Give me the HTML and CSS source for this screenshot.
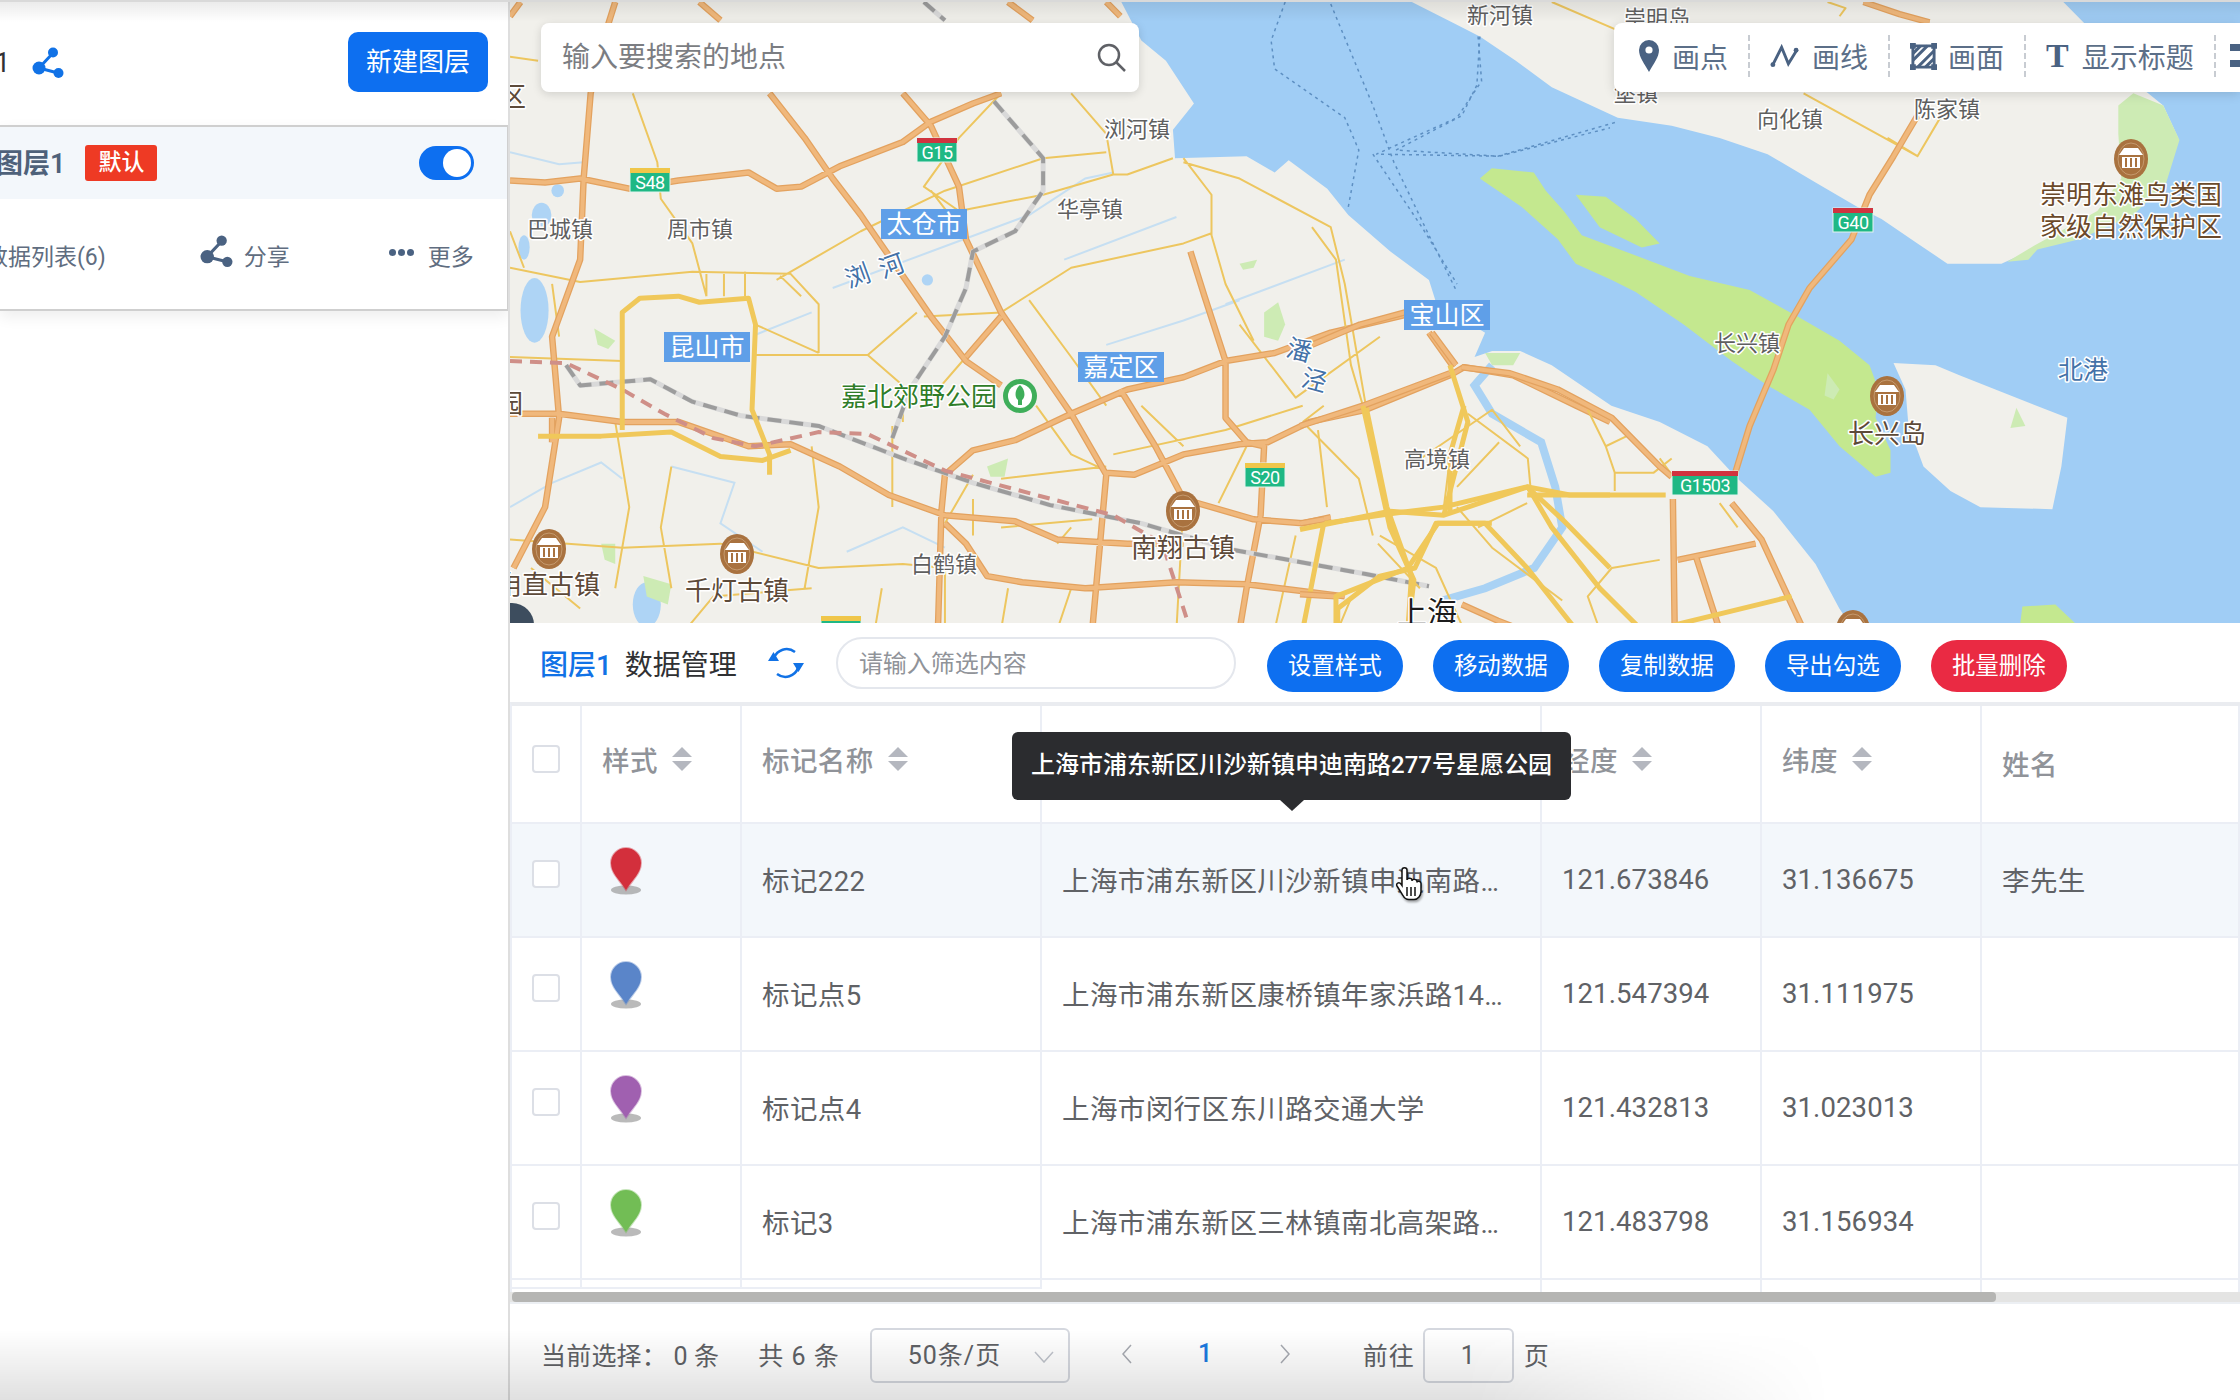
FILE: index.html
```html
<!DOCTYPE html>
<html lang="zh-CN">
<head>
    <meta charset="UTF-8">
    <title>图层数据管理</title>
    <link rel="stylesheet" href="styles.css">
</head>
<body>

<svg class="defs" aria-hidden="true">
    <symbol id="share" viewBox="0 0 32 32">
        <path d="M7 21 21 6M7 21l19 5" fill="none" stroke="currentColor" stroke-width="3"/>
        <circle cx="7" cy="21" r="6.5" fill="currentColor"/>
        <circle cx="21" cy="5.5" r="5" fill="currentColor"/>
        <circle cx="26.500" cy="26" r="5" fill="currentColor"/>
    </symbol>
    <symbol id="museum" viewBox="0 0 34 40">
        <ellipse cx="17" cy="20" rx="17" ry="20" fill="#a9723f"/>
        <ellipse cx="17" cy="20" rx="13" ry="16" fill="#a9723f" stroke="#c59a6e" stroke-width="1"/>
        <path d="M5 16 10 9h14l5 7z" fill="#fff"/>
        <path d="M8 18h18v11H8z" fill="#fff"/>
        <path d="M11 19h2v9h-2zM16 19h2v9h-2zM21 19h2v9h-2z" fill="#a9723f"/>
    </symbol>
    <symbol id="marker" viewBox="0 0 32 48">
        <ellipse cx="16" cy="43" rx="15" ry="4.500" fill="#8c8c8c" opacity=".6"/>
        <path d="M16 43C9 32 1 26 1 16a15 15 0 0 1 30 0c0 10-8 16-15 27z" fill="currentColor" stroke="currentColor" stroke-opacity=".4" stroke-width="2"/>
    </symbol>
</svg>

<div class="page">
    <aside class="sidebar">
        <div class="side-head">
            <span class="side-title">1</span>
            <svg class="share-blue"><use href="#share"/></svg>
            <button class="new-layer" type="button">新建图层</button>
        </div>
        <div class="layer-card">
            <div class="layer-top">
                <span class="layer-name">图层1</span>
                <span class="tag-default">默认</span>
                <span class="switch"><i></i></span>
            </div>
            <div class="layer-actions">
                <span class="data-count">数据列表(6)</span>
                <span class="layer-action share-action"><svg class="share-grey"><use href="#share"/></svg>分享</span>
                <span class="layer-action more-action"><b class="dots"><i></i><i></i><i></i></b>更多</span>
            </div>
        </div>
    </aside>

    <main class="content">
        <section class="map">
            <svg class="map-svg" viewBox="510 0 1730 623">
                <rect class="water" x="510" y="0" width="1730" height="623"/>

                <!-- 西侧：大陆部分 -->
                <g transform="translate(510 0) scale(.7015 .4057)">
                    <polygon class="land" points="0,0 870,0 900,100 935,150 975,255 945,320 948,390 1050,385 1090,425 1110,395 1165,465 1195,530 1255,620 1310,690 1320,745 1390,820 1375,880 1400,865 1440,865 1485,900 1570,1000 1639,1040 1707,1100 1750,1180 1801,1260 1861,1390 1895,1500 1916,1553 0,1553"/>
                    <ellipse class="lake" cx="35" cy="765" rx="20" ry="80"/>
                    <ellipse class="lake" cx="45" cy="530" rx="14" ry="30"/>
                    <ellipse class="lake" cx="68" cy="470" rx="9" ry="16"/>
                    <ellipse class="lake" cx="20" cy="610" rx="8" ry="30"/>
                    <ellipse class="lake" cx="195" cy="1490" rx="20" ry="55"/>
                    <ellipse class="lake" cx="595" cy="690" rx="8" ry="14"/>
                    <polygon class="park" points="1075,770 1095,745 1105,800 1095,840 1075,830"/>
                    <polygon class="park" points="680,1150 710,1130 705,1175 685,1175"/>
                    <polygon class="park" points="1040,650 1065,640 1060,660 1045,665"/>
                    <polygon class="park" points="120,810 150,840 140,860 125,850"/>
                    <polygon class="park" points="190,1420 230,1440 225,1490 195,1470"/>
                    <polygon class="park" points="130,1340 150,1340 150,1390 135,1380"/>
                    <polygon class="park" points="1390,870 1440,870 1430,900 1400,900"/>
                    <path class="creek" d="M460 710 600 620 740 530 820 440 860 425M350 825 430 770M790 640 950 535M1020 750 1190 640M850 850 960 790 1040 740M0 375 70 405 105 400M230 1150 320 1190 300 1290 360 1360M0 1250 60 1190 130 1140 160 1180M480 1360 560 1300 620 1350"/>
                    <path class="river" d="M1400 900 1375 950 1400 1020 1470 1090 1490 1200 1500 1300 1460 1400 1390 1450 1330 1480"/>

                    <g id="minor-roads">
                        <path d="M175 230 210 400 215 490 260 600 280 730M0 660 100 695 260 670 400 675 440 750 440 870M345 875 510 875 580 770M380 690 500 570 620 470 760 390 850 375M700 230 640 340 590 460 640 520 760 480 860 430 880 430 945 390M960 390 1000 480 1000 580 1020 700 1060 840M800 230 850 330 860 430M600 470 640 560M590 780 700 770 800 660 960 600 1000 575M740 740 800 880 850 1000M960 400 1040 440 1170 560 1190 700 1220 1000M160 1350 300 1340 440 1400 560 1390 620 1400M230 1150 215 1300 230 1450M150 1040 170 1250 150 1450M430 1100 440 1250 420 1450M545 1050 545 1250M700 1180 850 1150M1130 1040 1210 1180 1230 1320M700 1300 830 1280M1040 800 1120 980 1240 830M860 1120 1020 1060 1130 1000M280 670 280 730M305 670 305 730M335 670 335 730M385 680 415 730M0 880 160 890M510 875 560 950 560 1040M1350 1250 1400 1350 1500 1480M1240 1320 1320 1400 1360 1553M620 1553 620 1400M700 1553 710 1450M520 1553 530 1450M30 1400 100 1500M1010 1240 1050 1100M0 140 40 150M0 570 20 660M60 700 70 830M350 800 440 870M590 1000 650 880M660 1170 620 1290M750 1000 800 1120 850 1160M900 1000 960 1100M1160 1000 1130 1040M780 1553 800 1450M960 1240 950 1553M1120 1320 1090 1553M1200 1470 1180 1553M1290 1140 1400 1010 1440 1100M1410 1090 1350 1200M1380 1300 1450 1240M250 1553 290 1470 430 1450M0 1330 160 1350M780 1340 800 1300M660 1230 660 1320"/>
                    </g>

                    <g id="major-roads">
                        <path d="M0 445 50 450 100 440 170 465 240 445 340 425 380 465 415 460 470 410 560 350 600 300 660 255 700 230M150 5 140 60 115 230 105 440 100 640 60 830 70 1030 50 1250 5 1400M560 230 600 310 640 460 650 590 700 770 760 920 800 1020 850 1170 830 1553M0 1020 70 1020 160 1040 240 1040 340 1100 400 1095 470 1150 540 1220 620 1270 720 1285 780 1330 880 1340 960 1340M610 1553 615 1260 620 1170 660 1110 720 1085 800 1020 880 960 960 930 1020 890 1090 870 1170 820 1280 775M850 1165 890 1170 960 1120 1040 1095 1080 1090 1140 1040 1220 1010 1340 925 1360 905 1430 925 1520 1000 1568 1040M970 620 990 730 1020 890 1020 1030 1050 1090 1075 1100 1070 1270 1050 1450 1040 1553M620 1290 650 1340 680 1420 730 1435 820 1450 950 1435 1050 1440 1120 1455 1190 1470M870 960 920 1100 960 1230 1060 1280 1130 1290 1170 1275M370 230 420 340 460 440 500 530 560 680 600 780 650 890 700 950M650 880 700 780M1310 820 1345 905M850 5 870 40M270 5 300 50M710 5 745 50M0 40 15 5M60 1030 60 1090"/>
                    </g>
                    <use href="#major-roads" class="road-case"/>
                    <use href="#major-roads" class="road-fill"/>

                    <g id="rails">
                        <path d="M590 5 620 50M690 250 760 390 760 470 720 570 660 620 650 710 620 830 570 960 545 1080M80 900 100 950 200 935 260 990 330 1025 440 1050 560 1130 660 1190 770 1245 900 1290 1030 1355 1220 1415 1310 1445"/>
                    </g>
                    <use href="#rails" class="rail-base"/>
                    <use href="#rails" class="rail"/>
                    <path class="rail-red" d="M0 890 80 895 160 960 220 1020 290 1080 350 1100 440 1065 510 1070 620 1160 750 1220 860 1270 930 1340 970 1553"/>

                    <path class="express" d="M160 1060 160 770 185 735 240 730 270 745 340 735 350 800 345 1010 370 1120 370 1170M40 1075 130 1075 230 1065 300 1125 360 1135 400 1110M1130 1553 1160 1290 1260 1265 1330 1250 1450 1200 1500 1280 1568 1400M1220 1000 1250 1250 1285 1420 1280 1553M1360 1000 1340 1120 1340 1260M1180 1553 1180 1500 1240 1420 1290 1400 1320 1290 1390 1290 1450 1400 1520 1553M1450 1220 1568 1220"/>
                    <path class="shipping" d="M1105 5 1085 100 1090 170 1190 290 1210 370 1195 510M1170 10 1230 260 1260 400 1310 580 1350 720M1380 90 1385 200 1350 290 1235 380 1410 385 1568 315M1230 380 1300 560 1350 700"/>
                </g>

                <!-- 东侧：崇明、长兴、横沙 -->
                <g transform="translate(1300 0) scale(.5995 .4057)">
                    <polygon class="land" points="180,0 260,60 300,90 360,150 420,215 530,290 620,310 700,340 780,380 860,450 930,510 970,540 1030,600 1080,650 1170,650 1230,610 1330,560 1420,470 1465,340 1440,260 1390,200 1310,60 1270,0"/>
                    <polygon class="park" points="1390,230 1440,260 1467,345 1445,450 1390,530 1300,590 1230,615 1215,640 1180,645 1225,605 1330,520 1370,440 1365,330 1365,260"/>
                    <polygon class="island" points="300,440 320,415 390,425 410,470 440,520 470,580 560,630 650,680 750,715 830,780 900,840 950,900 965,960 960,1030 985,1110 985,1165 960,1175 900,1100 850,1010 780,950 720,890 640,800 560,720 520,690 460,650 430,590 370,510"/>
                    <polygon class="island" points="460,480 510,485 560,540 600,600 570,610 500,560"/>
                    <polygon class="land" points="990,895 1060,900 1100,925 1160,960 1280,1030 1270,1150 1255,1255 1135,1250 1085,1210 1040,1150 1015,1050 1010,960"/>
                    <polygon class="park" points="1195,1005 1210,1050 1185,1055"/>
                    <polygon class="park" points="880,920 900,960 890,985 875,975"/>
                    <polygon class="island" points="1200,1553 1205,1495 1260,1490 1305,1553"/>
                    <polygon class="island" points="1360,1553 1400,1535 1465,1553"/>
                    <path class="shipping" d="M300 90 295 210 270 285 160 370 330 385 530 300"/>

                    <g id="east-minor">
                        <path d="M420 5 530 75M840 230 1030 385 1070 285M880 5 910 20 900 40M980 340 1030 385M20 560 60 640 85 900 105 1000M480 1010 510 1100 525 1165 525 1210M510 1100 545 1075M525 1165 590 1165 620 1130M600 1130 620 1170M280 1020 380 1130 385 1210M250 1130 240 1250M600 1380 520 1400 480 1470 500 1553M700 1240 730 1300M130 1340 200 1450M30 1060 45 1250"/>
                    </g>
                    <g id="east-major">
                        <path d="M940 5 1000 35 1050 55M1030 285 990 385 950 480 920 590 850 710 815 800 790 910 750 1050 725 1170M20 850 100 800 175 770M220 820 260 900M270 905 350 920 430 960 520 1030 600 1150 620 1175M720 1240 770 1330 840 1553M622 1230 625 1553M630 1380 760 1340M660 1370 700 1553M0 1050 105 1000 250 920M0 1290 40 1280M270 1490 330 1530 370 1553M0 1465 60 1470"/>
                    </g>
                    <use href="#east-major" class="road-case"/>
                    <use href="#east-major" class="road-fill"/>
                    <path class="express" d="M380 1200 450 1220 610 1220M590 1553 820 1470M250 900 280 1040 240 1270M105 1000 150 1300 190 1430 180 1553M0 1305 150 1260 240 1270 380 1200 420 1300 500 1450 570 1553M60 1553 60 1470 180 1400 230 1290 320 1290"/>
                </g>

                <!-- 路牌 -->
                <rect class="shield" x="917" y="138" width="40" height="24"/><rect class="band-red" x="917" y="138" width="40" height="5"/>
                <text class="shield-text" x="937" y="154">G15</text>
                <rect class="shield" x="630" y="168" width="40" height="24"/><rect class="band-yellow" x="630" y="168" width="40" height="5"/>
                <text class="shield-text" x="650" y="184">S48</text>
                <rect class="shield" x="1833" y="208" width="40" height="24"/><rect class="band-red" x="1833" y="208" width="40" height="5"/>
                <text class="shield-text" x="1853" y="224">G40</text>
                <rect class="shield" x="1245" y="463" width="40" height="24"/><rect class="band-yellow" x="1245" y="463" width="40" height="5"/>
                <text class="shield-text" x="1265" y="479">S20</text>
                <rect class="shield" x="1672" y="471" width="66" height="24"/><rect class="band-red" x="1672" y="471" width="66" height="5"/>
                <text class="shield-text" x="1705" y="487">G1503</text>
                <rect class="shield" x="821" y="616" width="40" height="24"/><rect class="band-yellow" x="821" y="616" width="40" height="5"/>
                <text class="shield-text" x="841" y="632">S26</text>

                <!-- 景点 -->
                <use href="#museum" x="532" y="529" width="34" height="40"/>
                <use href="#museum" x="720" y="534" width="34" height="40"/>
                <use href="#museum" x="1166" y="491" width="34" height="40"/>
                <use href="#museum" x="2114" y="139" width="34" height="40"/>
                <use href="#museum" x="1870" y="376" width="34" height="40"/>
                <use href="#museum" x="1836" y="610" width="34" height="40"/>
                <circle class="park-dot" cx="1020" cy="396" r="17"/>
                <circle class="park-ring" cx="1020" cy="396" r="12"/>
                <path class="park-tree" d="M1020 385c5 4 6 12 2 15v5h-4v-5c-4-3-3-11 2-15z"/>
                <circle class="locate" cx="512" cy="625" r="22"/>

                <!-- 地名 -->
                <text class="town" x="1500" y="15">新河镇</text>
                <text class="town" x="1657" y="18">崇明岛</text>
                <text class="town" x="1636" y="93">堡镇</text>
                <text class="town" x="1790" y="119">向化镇</text>
                <text class="town" x="1947" y="109">陈家镇</text>
                <text class="town" x="1137" y="129">浏河镇</text>
                <text class="town" x="1090" y="209">华亭镇</text>
                <text class="town" x="560" y="229">巴城镇</text>
                <text class="town" x="700" y="229">周市镇</text>
                <text class="town" x="1747" y="343">长兴镇</text>
                <text class="town" x="1437" y="459">高境镇</text>
                <text class="town" x="944" y="564">白鹤镇</text>
                <text class="river-name" transform="translate(857 276) rotate(-20)">浏</text>
                <text class="river-name" transform="translate(891 266) rotate(-20)">河</text>
                <text class="river-name" transform="translate(1300 350) rotate(15)">潘</text>
                <text class="river-name" transform="translate(1315 380) rotate(15)">泾</text>
                <text class="river-name" x="2083" y="370">北港</text>
                <text class="scenic" x="1183" y="547">南翔古镇</text>
                <text class="scenic" x="737" y="590">千灯古镇</text>
                <text class="scenic" x="548" y="584">甪直古镇</text>
                <text class="scenic" x="1887" y="433">长兴岛</text>
                <text class="scenic" x="513" y="96">区</text>
                <text class="scenic" x="510" y="403">园</text>
                <text class="reserve" x="2131" y="194">崇明东滩鸟类国</text>
                <text class="reserve" x="2131" y="226">家级自然保护区</text>
                <text class="park-name" x="919" y="396">嘉北郊野公园</text>
                <text class="city" x="1427" y="612">上海</text>

                <rect class="district" x="881" y="209" width="86" height="30"/>
                <text class="district-text" x="924" y="224">太仓市</text>
                <rect class="district" x="664" y="332" width="86" height="30"/>
                <text class="district-text" x="707" y="347">昆山市</text>
                <rect class="district" x="1078" y="352" width="86" height="30"/>
                <text class="district-text" x="1121" y="367">嘉定区</text>
                <rect class="district" x="1404" y="300" width="86" height="30"/>
                <text class="district-text" x="1447" y="315">宝山区</text>
            </svg>

            <div class="map-overlay">
                <div class="map-search">
                    <span class="search-text">输入要搜索的地点</span>
                    <svg viewBox="0 0 30 30" class="search-icon"><circle cx="12" cy="12" r="10"/><path d="M19 19l9 9"/></svg>
                </div>
                <div class="draw-tools">
                    <span class="tool">
                        <svg class="tool-icon tool-pin" viewBox="0 0 20 32"><path d="M10 32C5 23 0 17 0 10a10 10 0 0 1 20 0c0 7-5 13-10 22z" fill="currentColor"/><circle cx="10" cy="10" r="3.600" fill="#fff"/></svg>
                        画点
                    </span>
                    <span class="tool">
                        <svg class="tool-icon tool-line" viewBox="0 0 30 24"><path d="M3 21 12 3l7 17 8-13" fill="none" stroke="currentColor" stroke-width="3"/><circle cx="3" cy="21" r="2.500" fill="currentColor"/><circle cx="27" cy="6" r="2.500" fill="currentColor"/></svg>
                        画线
                    </span>
                    <span class="tool">
                        <svg class="tool-icon tool-area" viewBox="0 0 28 28"><path d="M3 3h22v22H3z" fill="none" stroke="currentColor" stroke-width="3"/><path d="M3 18 18 3M8 25 25 8M3 11l8-8M16 25l9-9" stroke="currentColor" stroke-width="3"/><path d="M0 0h6v6H0zM22 0h6v6h-6zM0 22h6v6H0zM22 22h6v6h-6z" fill="currentColor"/></svg>
                        画面
                    </span>
                    <span class="tool">
                        <b class="tool-t">T</b>
                        显示标题
                    </span>
                    <span class="tool tool-last">
                        <svg class="tool-icon tool-table" viewBox="0 0 28 28"><path d="M0 2h28v7H0zM0 18h28v7H0z" fill="currentColor"/></svg>
                    </span>
                </div>
            </div>
        </section>

        <section class="data-panel">
            <div class="data-bar">
                <h2 class="data-title"><em>图层1</em> 数据管理</h2>
                <svg class="refresh" viewBox="0 0 38 38">
                    <path d="M7 14C10 6 20 2 28 8M31 24c-3 8-13 12-21 6" fill="none" stroke="#1172e6" stroke-width="2.500"/>
                    <path d="M1 17h11L6.500 8zM37 19H26l5.500 9z" fill="#1172e6"/>
                </svg>
                <div class="filter-input">请输入筛选内容</div>
                <button class="pill" type="button">设置样式</button>
                <button class="pill" type="button">移动数据</button>
                <button class="pill" type="button">复制数据</button>
                <button class="pill" type="button">导出勾选</button>
                <button class="pill pill-danger" type="button">批量删除</button>
            </div>

            <div class="table">
                <div class="row row-head">
                    <div class="cell"><span class="check"></span></div>
                    <div class="cell">样式<span class="sort"></span></div>
                    <div class="cell">标记名称<span class="sort"></span></div>
                    <div class="cell">详细地址<span class="sort"></span></div>
                    <div class="cell">经度<span class="sort"></span></div>
                    <div class="cell">纬度<span class="sort"></span></div>
                    <div class="cell cell-plain">姓名</div>
                </div>
                <div class="row row-hover">
                    <div class="cell"><span class="check"></span></div>
                    <div class="cell"><svg class="marker marker-red"><use href="#marker"/></svg></div>
                    <div class="cell">标记222</div>
                    <div class="cell"><span class="addr">上海市浦东新区川沙新镇申迪南路277号星愿公园</span></div>
                    <div class="cell num">121.673846</div>
                    <div class="cell num">31.136675</div>
                    <div class="cell">李先生</div>
                </div>
                <div class="row">
                    <div class="cell"><span class="check"></span></div>
                    <div class="cell"><svg class="marker marker-blue"><use href="#marker"/></svg></div>
                    <div class="cell">标记点5</div>
                    <div class="cell"><span class="addr">上海市浦东新区康桥镇年家浜路1433号</span></div>
                    <div class="cell num">121.547394</div>
                    <div class="cell num">31.111975</div>
                    <div class="cell"></div>
                </div>
                <div class="row">
                    <div class="cell"><span class="check"></span></div>
                    <div class="cell"><svg class="marker marker-purple"><use href="#marker"/></svg></div>
                    <div class="cell">标记点4</div>
                    <div class="cell"><span class="addr">上海市闵行区东川路交通大学</span></div>
                    <div class="cell num">121.432813</div>
                    <div class="cell num">31.023013</div>
                    <div class="cell"></div>
                </div>
                <div class="row">
                    <div class="cell"><span class="check"></span></div>
                    <div class="cell"><svg class="marker marker-green"><use href="#marker"/></svg></div>
                    <div class="cell">标记3</div>
                    <div class="cell"><span class="addr">上海市浦东新区三林镇南北高架路东侧</span></div>
                    <div class="cell num">121.483798</div>
                    <div class="cell num">31.156934</div>
                    <div class="cell"></div>
                </div>
                <div class="row row-cut">
                    <div class="cell"></div>
                    <div class="cell"></div>
                    <div class="cell"></div>
                    <div class="cell"></div>
                    <div class="cell"></div>
                    <div class="cell"></div>
                    <div class="cell"></div>
                </div>
            </div>
            <div class="scrollbar"><div class="thumb"></div></div>

            <div class="pager">
                <span class="pager-selected">当前选择： 0 条</span>
                <span class="pager-total">共 6 条</span>
                <div class="page-size">50条/页<svg class="chevron" viewBox="0 0 20 12"><path d="M1 1l9 10 9-10"/></svg></div>
                <svg class="page-arrow page-prev" viewBox="0 0 10 20"><path d="M9 1 1 10l8 9"/></svg>
                <span class="page-current">1</span>
                <svg class="page-arrow page-next" viewBox="0 0 10 20"><path d="M1 1l8 9-8 9"/></svg>
                <span class="page-goto">前往</span>
                <div class="page-input">1</div>
                <span class="page-unit">页</span>
            </div>

            <div class="tooltip">上海市浦东新区川沙新镇申迪南路277号星愿公园</div>
            <svg class="hand" viewBox="0 0 30 36">
                <path d="M8 3c0-3 5-3 5 0v10c0-2.500 5-2.500 5 0v1c0-2.500 5-2 5 .5v1c0-2 4-1.500 4 1v8c0 4-3 8-7 8h-5c-3 0-5-2-6-4L3 19c-1.500-2.500 2-4.500 4-2l1 1.500z"/>
                <path d="M13 20v9M17 20v9M21 20v9"/>
            </svg>
        </section>
    </main>

    <div class="shade-top"></div>
    <div class="shade-bottom"></div>
</div>

</body>
</html>
```

FILE: styles.css
```css
* {
    box-sizing: border-box;
    margin: 0;
    padding: 0;
}

body {
    font-family: Roboto, "Noto Sans CJK SC", sans-serif;
    background-color: #fff;
    color: #606266;
    overflow: hidden;
}

.defs {
    position: absolute;
    width: 0;
    height: 0;
}

.page {
    position: relative;
    display: flex;
    width: 2240px;
    height: 1400px;
    overflow: hidden;
}

/* Sidebar */
.sidebar {
    flex: 0 0 510px;
    border-right: 2px solid #dedede;
    overflow: hidden;
}

.side-head {
    display: flex;
    align-items: center;
    height: 125px;
    padding: 0 20px 0 0;
    box-shadow: 0 4px 10px rgba(0, 0, 0, .05);
}

.side-title {
    margin-left: -5px;
    font-size: 27px;
    color: #303133;
}

.share-blue {
    width: 32px;
    height: 32px;
    margin: 0 0 0 22px;
    color: #1172e6;
}

.new-layer {
    width: 140px;
    height: 60px;
    margin: -2px 0 0 auto;
    padding-bottom: 4px;
    border: none;
    border-radius: 10px;
    background-color: #0d6ff0;
    color: #fff;
    font: 26px "Noto Sans CJK SC", sans-serif;
}

.layer-card {
    height: 186px;
    border: 2px solid #cfcfcf;
    border-left: none;
    border-right-width: 1px;
    box-shadow: 0 6px 14px rgba(0, 0, 0, .07);
}

.layer-top {
    display: flex;
    align-items: center;
    height: 72px;
    padding-right: 33px;
    background-color: #f3f7fb;
}

.layer-name {
    margin: -4px 0 0 -4px;
    font-size: 27px;
    font-weight: 600;
    color: #4e617a;
}

.tag-default {
    width: 72px;
    height: 36px;
    margin-left: 20px;
    border-radius: 3px;
    background-color: #ee3a24;
    color: #fff;
    font-size: 23px;
    font-weight: 500;
    line-height: 36px;
    text-align: center;
}

.switch {
    position: relative;
    width: 55px;
    height: 34px;
    margin-left: auto;
    border-radius: 17px;
    background-color: #0d6ff0;
}

.switch i {
    position: absolute;
    top: 3px;
    right: 3px;
    width: 28px;
    height: 28px;
    border-radius: 50%;
    background-color: #fff;
}

.layer-actions {
    display: flex;
    align-items: center;
    height: 112px;
    font-size: 23px;
    color: #606d80;
}

.data-count {
    margin-left: -15px;
}

.layer-action {
    display: flex;
    align-items: center;
}

.share-action {
    margin-left: 94px;
}

.share-grey {
    width: 33px;
    height: 33px;
    margin: -8px 11px 0 0;
    color: #4a6282;
}

.more-action {
    margin-left: 99px;
}

.dots {
    display: flex;
    gap: 2px;
    margin: -6px 14px 0 0;
}

.dots i {
    width: 7px;
    height: 7px;
    border-radius: 50%;
    background-color: #4a6282;
}

/* Map */
.content {
    flex: 1;
    min-width: 0;
}

.map {
    position: relative;
    height: 623px;
    overflow: hidden;
}

.map-svg {
    display: block;
    width: 1730px;
    height: 623px;
}

.map-svg path {
    vector-effect: non-scaling-stroke;
}

.map-svg text {
    font-family: "Noto Sans CJK SC", sans-serif;
    text-anchor: middle;
    dominant-baseline: central;
    translate: 0 -2px;
    paint-order: stroke;
    stroke: #fff;
    stroke-width: 3px;
    stroke-linejoin: round;
}

.water { fill: #a0cdf5; }
.land { fill: #f1f0eb; }
.lake { fill: #aed4f5; }
.park { fill: #cdebb4; }
.island { fill: #c4e88f; }

.creek {
    fill: none;
    stroke: #c6dff2;
    stroke-width: 2px;
}

.river {
    fill: none;
    stroke: #a9d2f4;
    stroke-width: 8px;
}

#minor-roads path,
#east-minor path {
    fill: none;
    stroke: #edc65f;
    stroke-width: 2px;
    stroke-linejoin: round;
}

#major-roads path,
#east-major path,
#rails path {
    fill: none;
    stroke-linejoin: round;
}

.road-case {
    stroke: #e3a25f;
    stroke-width: 6.500px;
}

.road-fill {
    stroke: #f0b87c;
    stroke-width: 4px;
}

.express {
    fill: none;
    stroke: #f0c85a;
    stroke-width: 5px;
    stroke-linejoin: round;
}

.rail-base {
    stroke: #d9d9d9;
    stroke-width: 5px;
}

.rail {
    stroke: #9c9c9c;
    stroke-width: 4px;
    stroke-dasharray: 14 8;
}

.rail-red {
    fill: none;
    stroke: #cf8f88;
    stroke-width: 4px;
    stroke-dasharray: 12 8;
}

.shipping {
    fill: none;
    stroke: #5d8fc2;
    stroke-width: 1.500px;
    stroke-dasharray: 3 4;
}

.shield {
    fill: #1fb884;
    stroke: #e6f4f0;
    stroke-width: 1px;
}

.band-red { fill: #d0333f; }
.band-yellow { fill: #f0c64a; }

.map-svg .shield-text {
    font-family: Roboto, sans-serif;
    font-size: 18px;
    letter-spacing: -.5px;
    fill: #fff;
    stroke: none;
}

.park-dot { fill: #3fae5a; }
.park-ring { fill: #fff; }
.park-tree { fill: #3fae5a; }
.locate { fill: #3d4d5e; }

.map-svg .town {
    font-size: 22px;
    fill: #5f5f5f;
}

.map-svg .river-name {
    font-size: 25px;
    fill: #4472a8;
}

.map-svg .scenic {
    font-size: 26px;
    fill: #5d4a39;
}

.map-svg .reserve {
    font-size: 26px;
    fill: #6b4a2b;
}

.map-svg .park-name {
    font-size: 26px;
    fill: #2f7d28;
}

.map-svg .city {
    font-size: 30px;
    fill: #1c1c1c;
}

.district { fill: #5f9fe8; }

.map-svg .district-text {
    font-size: 25px;
    fill: #fff;
    stroke: none;
}

.map-overlay {
    position: absolute;
    top: 23px;
    left: 31px;
    right: 0;
    display: flex;
    justify-content: space-between;
}

.map-search {
    display: flex;
    align-items: center;
    justify-content: space-between;
    width: 598px;
    height: 69px;
    padding: 0 12px 0 21px;
    border-radius: 8px;
    background-color: #fff;
    box-shadow: 0 2px 10px rgba(0, 0, 0, .14);
    font-size: 28px;
    color: #7b7d82;
}

.search-text {
    margin-top: -5px;
}

.search-icon {
    width: 30px;
    height: 30px;
    fill: none;
    stroke: #5f6166;
    stroke-width: 2.500;
}

.draw-tools {
    display: flex;
    align-items: center;
    width: 626px;
    height: 69px;
    padding: 0 0 3px 25px;
    overflow: hidden;
    border-radius: 8px 0 0 8px;
    background-color: #fff;
    box-shadow: 0 2px 12px rgba(0, 0, 0, .14);
    color: #5c6f88;
    font-size: 28px;
}

.tool {
    position: relative;
    display: flex;
    flex-shrink: 0;
    align-items: center;
    gap: 13px;
    height: 42px;
    padding-right: 20px;
    margin-right: 20px;
    border-right: 2px dashed #c8ccd2;
    color: #5c6f88;
    white-space: nowrap;
}

.tool-last {
    border: none;
    padding: 0;
    margin: 0;
}

.tool-icon {
    flex-shrink: 0;
    color: #4a6282;
}

.tool-pin { width: 20px; height: 32px; }
.tool-line { width: 29px; height: 24px; }
.tool-area { width: 27px; height: 27px; margin-right: -2px; }
.tool-table { width: 28px; height: 28px; margin-left: -6px; }

.tool-t {
    font-family: "Liberation Serif", serif;
    font-size: 34px;
    line-height: 1;
    color: #4a6282;
}

/* Data panel */
.data-panel {
    position: relative;
    height: 777px;
}

.data-bar {
    display: flex;
    align-items: center;
    height: 79px;
    padding-left: 30px;
}

.data-title {
    font-size: 28px;
    font-weight: 400;
    color: #303133;
    white-space: nowrap;
}

.data-title em {
    margin-right: 6px;
    font-style: normal;
    font-weight: 500;
    color: #1172e6;
}

.refresh {
    width: 38px;
    height: 38px;
    margin-left: 30px;
}

.filter-input {
    width: 400px;
    height: 52px;
    margin: 0 31px 0 31px;
    padding-left: 21px;
    border: 2px solid #e4e7ed;
    border-radius: 26px;
    font-size: 24px;
    line-height: 50px;
    color: #909399;
}

.pill {
    width: 136px;
    height: 52px;
    margin: 7px 30px 0 0;
    padding-bottom: 4px;
    border: none;
    border-radius: 26px;
    background-color: #0d6ff0;
    color: #fff;
    font: 23.500px "Noto Sans CJK SC", sans-serif;
}

.pill-danger {
    background-color: #ea2a43;
}

/* Table */
.table {
    height: 590px;
    overflow: hidden;
    border-top: 4px solid #eaecf0;
    border-left: 2px solid #ebeef5;
}

.row {
    display: grid;
    grid-template-columns: 70px 160px 300px 500px 220px 220px 1fr;
    height: 114px;
    border-bottom: 2px solid #ebeef5;
    font-size: 27.500px;
    letter-spacing: .4px;
}

.row-head {
    height: 118px;
    color: #909399;
    font-weight: 500;
}

.row-hover {
    background-color: #f3f7fb;
}

.row-cut {
    height: 12px;
    border-bottom: none;
}

.row-cut .cell:nth-child(-n+3) {
    height: 9px;
    border-bottom: 2px solid #ebeef5;
}

.cell {
    display: flex;
    align-items: center;
    min-width: 0;
    padding: 0 20px 2px;
    border-right: 2px solid #ebeef5;
}

.num {
    letter-spacing: .1px;
}

.row-head .cell {
    padding-bottom: 10px;
}

.row-head .cell-plain {
    padding-bottom: 2px;
}

.row:not(.row-head) .cell:first-child .check {
    margin-bottom: 10px;
}

.check {
    display: block;
    width: 28px;
    height: 28px;
    border: 2px solid #dcdfe6;
    border-radius: 4px;
    background-color: #fff;
}

.sort {
    position: relative;
    display: block;
    width: 20px;
    height: 24px;
    margin-left: 14px;
}

.sort::before,
.sort::after {
    content: "";
    position: absolute;
    left: 0;
    border-left: 10px solid transparent;
    border-right: 10px solid transparent;
}

.sort::before {
    top: 0;
    border-bottom: 10px solid #b4b7bf;
}

.sort::after {
    bottom: 0;
    border-top: 10px solid #b4b7bf;
}

.marker {
    display: block;
    width: 32px;
    height: 48px;
    margin: 0 0 16px 8px;
    filter: blur(.6px);
}

.marker-red { color: #d32f3c; }
.marker-blue { color: #5a85c9; }
.marker-purple { color: #a060b0; }
.marker-green { color: #72bd55; }

.addr {
    display: block;
    max-width: 449px;
    overflow: hidden;
    white-space: nowrap;
    text-overflow: ellipsis;
}

.scrollbar {
    height: 12px;
    border-bottom: 2px solid #eceff3;
    background-color: #e4e4e3;
}

.thumb {
    width: 1484px;
    height: 10px;
    margin-left: 2px;
    border-radius: 4px;
    background-color: #b5b5b3;
}

/* Pager */
.pager {
    display: flex;
    align-items: center;
    height: 96px;
    padding: 3px 0 0 31px;
    font-size: 25px;
    letter-spacing: 1px;
}

.pager-selected {
    letter-spacing: .2px;
}

.pager-total {
    margin-left: 39px;
}

.page-size {
    position: relative;
    width: 200px;
    height: 55px;
    margin: 4px 0 0 30px;
    padding-left: 36px;
    border: 2px solid #d5d8df;
    border-radius: 6px;
    line-height: 52px;
}

.chevron {
    position: absolute;
    top: 21px;
    right: 14px;
    width: 20px;
    height: 12px;
    fill: none;
    stroke: #c0c4cc;
    stroke-width: 1.500;
}

.page-arrow {
    width: 10px;
    height: 20px;
    fill: none;
    stroke: #a8abb2;
    stroke-width: 1.500;
}

.page-prev {
    margin-left: 52px;
}

.page-current {
    width: 20px;
    margin-left: 64px;
    font-weight: 500;
    text-align: center;
    color: #1c7ae0;
}

.page-next {
    margin-left: 64px;
}

.page-goto {
    margin-left: 73px;
}

.page-input {
    width: 91px;
    height: 55px;
    margin: 4px 10px 0 8px;
    border: 2px solid #d5d8df;
    border-radius: 6px;
    line-height: 52px;
    text-align: center;
}

/* Tooltip and cursor, over the table */
.tooltip {
    position: absolute;
    top: 109px;
    left: 502px;
    width: 559px;
    height: 68px;
    border-radius: 6px;
    background-color: #2b2c2f;
    color: #fff;
    font-size: 24px;
    font-weight: 500;
    line-height: 66px;
    text-align: center;
    white-space: nowrap;
}

.tooltip::after {
    content: "";
    position: absolute;
    top: 100%;
    left: 268px;
    border-left: 12px solid transparent;
    border-right: 12px solid transparent;
    border-top: 11px solid #2b2c2f;
}

.hand {
    position: absolute;
    top: 243px;
    left: 884px;
    width: 30px;
    height: 38px;
    fill: #fff;
    stroke: #111;
    stroke-width: 1.500;
    filter: drop-shadow(1px 2px 1px rgba(0, 0, 0, .35));
}

/* Edge shading of the capture */
.shade-top {
    position: absolute;
    top: 0;
    left: 0;
    right: 0;
    height: 22px;
    border-top: 2px solid #d9d9d9;
    background: linear-gradient(rgba(0, 0, 0, .08), rgba(0, 0, 0, 0));
    pointer-events: none;
}

.shade-bottom {
    position: absolute;
    bottom: 0;
    left: 0;
    width: 1830px;
    height: 70px;
    background: linear-gradient(rgba(0, 0, 0, 0), rgba(0, 0, 0, .12));
    -webkit-mask-image: linear-gradient(to right, #000 80%, transparent);
    mask-image: linear-gradient(to right, #000 80%, transparent);
    pointer-events: none;
}
```
